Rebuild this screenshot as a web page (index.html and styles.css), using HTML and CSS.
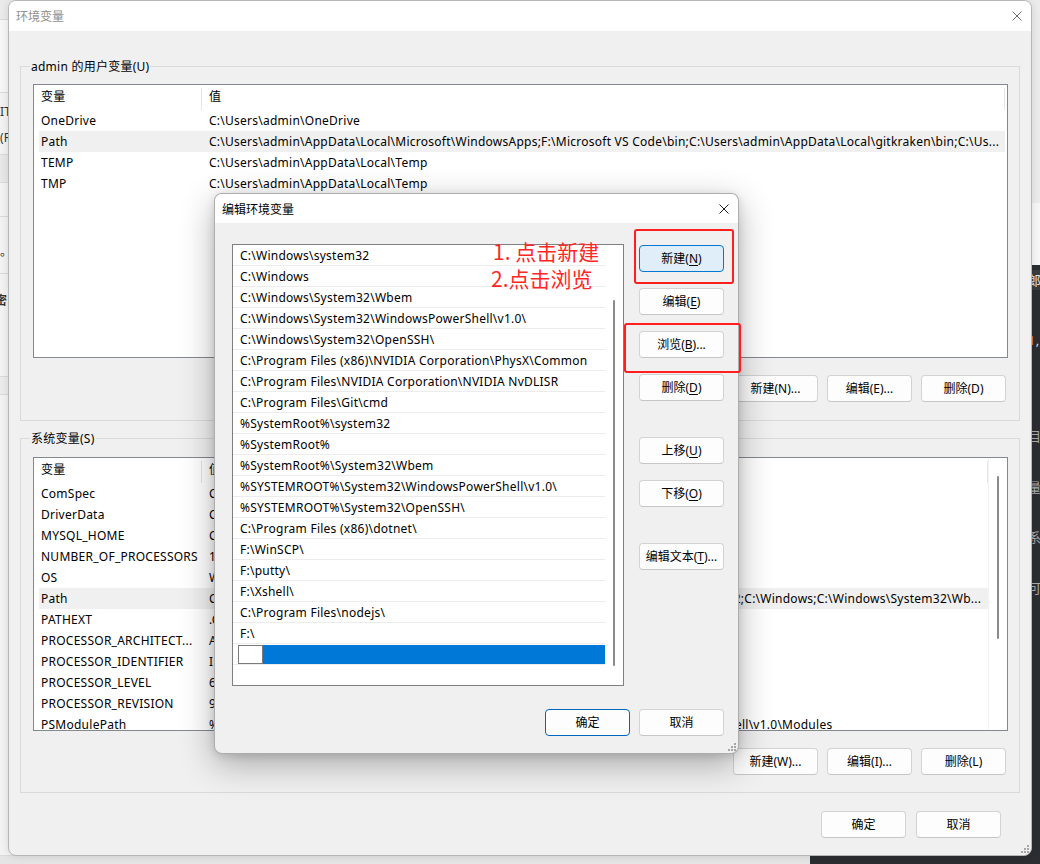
FILE: index.html
```html
<!DOCTYPE html>
<html lang="zh-CN">
<head>
<meta charset="utf-8">
<title>环境变量</title>
<link rel="stylesheet" href="styles.css">
</head>
<body>
<div class="desktop">

  <div class="bg-left">
    <div class="bl bl1"></div>
    <div class="bl bl2"></div>
    <div class="bl bl3"><div class="bl-t">IT</div><div class="bl-t">(R</div></div>
    <div class="bl bl4"></div>
    <div class="bl bl5"></div>
    <div class="bl bl6"><div class="bl-t">。</div></div>
    <div class="bl bl7"><div class="bl-t bl-bold">密</div></div>
    <div class="bl bl8"></div>
    <div class="bl bl9"></div>
  </div>

  <div class="bg-topright">
    <div class="tr-band"></div>
    <div class="tr-white"></div>
  </div>

  <div class="bg-dark">
    <div class="frag f1"><span class="frag-hl">郎</span></div>
    <div class="frag f2"><span class="frag-or">1</span>,</div>
    <div class="frag f3">目</div>
    <div class="frag f4">量</div>
    <div class="frag f5">系</div>
    <div class="frag f6">可</div>
  </div>

  <div class="win main-win">
    <div class="titlebar">
      <span class="title title-inactive">环境变量</span>
      <svg class="close" width="10" height="10" viewBox="0 0 10 10"><path d="M0.5 0.5L9.5 9.5M9.5 0.5L0.5 9.5" stroke="#6b6b6b" stroke-width="1" fill="none"/></svg>
    </div>
    <div class="main-body">
      <section class="group group-user">
        <div class="legend">admin 的用户变量(U)</div>
        <div class="lv">
          <div class="lv-main lv-main-user">
            <div class="lv-head"><div class="hc hc-name">变量</div><div class="hc hc-val">值</div></div>
            <div class="lv-row"><div class="c-name">OneDrive</div><div class="c-val">C:\Users\admin\OneDrive</div></div>
            <div class="lv-row hl"><div class="c-name">Path</div><div class="c-val">C:\Users\admin\AppData\Local\Microsoft\WindowsApps;F:\Microsoft VS Code\bin;C:\Users\admin\AppData\Local\gitkraken\bin;C:\Us...</div></div>
            <div class="lv-row"><div class="c-name">TEMP</div><div class="c-val">C:\Users\admin\AppData\Local\Temp</div></div>
            <div class="lv-row"><div class="c-name">TMP</div><div class="c-val">C:\Users\admin\AppData\Local\Temp</div></div>
          </div>
        </div>
        <div class="btn-row">
          <button class="btn">新建(N)...</button>
          <button class="btn">编辑(E)...</button>
          <button class="btn">删除(D)</button>
        </div>
      </section>

      <section class="group group-sys">
        <div class="legend">系统变量(S)</div>
        <div class="lv">
          <div class="lv-main">
            <div class="lv-head"><div class="hc hc-name">变量</div><div class="hc hc-val">值</div></div>
            <div class="lv-row"><div class="c-name">ComSpec</div><div class="c-val">C:\WINDOWS\system32\cmd.exe</div></div>
            <div class="lv-row"><div class="c-name">DriverData</div><div class="c-val">C:\Windows\System32\Drivers\DriverData</div></div>
            <div class="lv-row"><div class="c-name">MYSQL_HOME</div><div class="c-val">C:\Program Files\MySQL\MySQL Server 8.0</div></div>
            <div class="lv-row"><div class="c-name">NUMBER_OF_PROCESSORS</div><div class="c-val">16</div></div>
            <div class="lv-row"><div class="c-name">OS</div><div class="c-val">Windows_NT</div></div>
            <div class="lv-row hl"><div class="c-name">Path</div><div class="c-val">C:\Program Files\Common Files\Oracle\Java\javapath;D:\jdk1.8\bin;C:\WINDOWS\system32;C:\Windows;C:\Windows\System32\Wb...</div></div>
            <div class="lv-row"><div class="c-name">PATHEXT</div><div class="c-val">.COM;.EXE;.BAT;.CMD;.VBS;.VBE;.JS;.JSE;.WSF;.WSH;.MSC</div></div>
            <div class="lv-row"><div class="c-name">PROCESSOR_ARCHITECT...</div><div class="c-val">AMD64</div></div>
            <div class="lv-row"><div class="c-name">PROCESSOR_IDENTIFIER</div><div class="c-val">Intel64 Family 6 Model 154 Stepping 3, GenuineIntel</div></div>
            <div class="lv-row"><div class="c-name">PROCESSOR_LEVEL</div><div class="c-val">6</div></div>
            <div class="lv-row"><div class="c-name">PROCESSOR_REVISION</div><div class="c-val">9a03</div></div>
            <div class="lv-row"><div class="c-name">PSModulePath</div><div class="c-val">%ProgramFiles%\WindowsPowerShell\Modules;C:\WINDOWS\system32\WindowsPowerShell\v1.0\Modules</div></div>
          </div>
          <div class="lv-scroll"><div class="thumb thumb-sys"></div></div>
        </div>
        <div class="btn-row">
          <button class="btn">新建(W)...</button>
          <button class="btn">编辑(I)...</button>
          <button class="btn">删除(L)</button>
        </div>
      </section>

      <div class="main-foot">
        <button class="btn">确定</button>
        <button class="btn">取消</button>
      </div>
    </div>
    <svg class="grip" width="8" height="8" viewBox="0 0 8 8"><g fill="#a6a6a6"><rect x="6" y="0" width="2" height="2"/><rect x="6" y="3" width="2" height="2"/><rect x="3" y="3" width="2" height="2"/><rect x="6" y="6" width="2" height="2"/><rect x="3" y="6" width="2" height="2"/><rect x="0" y="6" width="2" height="2"/></g></svg>
  </div>

  <div class="win dialog">
    <div class="titlebar dlg-titlebar">
      <span class="title">编辑环境变量</span>
      <svg class="close" width="10" height="10" viewBox="0 0 10 10"><path d="M0.5 0.5L9.5 9.5M9.5 0.5L0.5 9.5" stroke="#1a1a1a" stroke-width="1" fill="none"/></svg>
    </div>
    <div class="dlg-body">
      <div class="dlg-top">
        <div class="plist">
          <ul class="pl-items">
            <li>C:\Windows\system32</li>
            <li>C:\Windows</li>
            <li>C:\Windows\System32\Wbem</li>
            <li>C:\Windows\System32\WindowsPowerShell\v1.0\</li>
            <li>C:\Windows\System32\OpenSSH\</li>
            <li>C:\Program Files (x86)\NVIDIA Corporation\PhysX\Common</li>
            <li>C:\Program Files\NVIDIA Corporation\NVIDIA NvDLISR</li>
            <li>C:\Program Files\Git\cmd</li>
            <li>%SystemRoot%\system32</li>
            <li>%SystemRoot%</li>
            <li>%SystemRoot%\System32\Wbem</li>
            <li>%SYSTEMROOT%\System32\WindowsPowerShell\v1.0\</li>
            <li>%SYSTEMROOT%\System32\OpenSSH\</li>
            <li>C:\Program Files (x86)\dotnet\</li>
            <li>F:\WinSCP\</li>
            <li>F:\putty\</li>
            <li>F:\Xshell\</li>
            <li>C:\Program Files\nodejs\</li>
            <li>F:\</li>
            <li class="editing"><span class="edit-box"></span><span class="edit-sel"></span></li>
          </ul>
          <div class="pl-scroll"><div class="thumb thumb-dlg"></div></div>
        </div>
        <div class="dlg-btns">
          <button class="btn btn-focus">新建(<u>N</u>)</button>
          <button class="btn">编辑(<u>E</u>)</button>
          <button class="btn">浏览(<u>B</u>)...</button>
          <button class="btn">删除(<u>D</u>)</button>
          <button class="btn spaced">上移(<u>U</u>)</button>
          <button class="btn">下移(<u>O</u>)</button>
          <button class="btn spaced">编辑文本(<u>T</u>)...</button>
        </div>
      </div>
      <div class="dlg-foot">
        <button class="btn btn-default">确定</button>
        <button class="btn">取消</button>
      </div>
    </div>
    <svg class="grip" width="8" height="8" viewBox="0 0 8 8"><g fill="#a6a6a6"><rect x="6" y="0" width="2" height="2"/><rect x="6" y="3" width="2" height="2"/><rect x="3" y="3" width="2" height="2"/><rect x="6" y="6" width="2" height="2"/><rect x="3" y="6" width="2" height="2"/><rect x="0" y="6" width="2" height="2"/></g></svg>
  </div>

  <div class="mark mark-new"></div>
  <div class="mark mark-browse"></div>
  <div class="note note-1">1. 点击新建</div>
  <div class="note note-2">2.点击浏览</div>
</div>
</body>
</html>
```

FILE: styles.css
```css
* { box-sizing: border-box; }

html, body { margin: 0; padding: 0; }

body {
  width: 1040px;
  height: 864px;
  overflow: hidden;
  background: #e5e5e5;
  font-family: "Noto Sans", "Noto Sans CJK SC", sans-serif;
  font-size: 12px;
  letter-spacing: 0.25px;
  color: #000;
}

.desktop {
  position: relative;
  width: 1040px;
  height: 864px;
}

/* ---------- background windows ---------- */
.bg-left {
  position: absolute;
  left: 0;
  top: 0;
  width: 60px;
  height: 856px;
  background: #f3f3f3;
  display: flex;
  flex-direction: column;
  overflow: hidden;
}
.bl { border-bottom: 1px solid #dadada; flex: none; white-space: nowrap; }
.bl1 { height: 20px; background: #ebebeb; }
.bl2 { height: 73px; background: #f7f7f7; }
.bl3 { height: 62px; padding-top: 6px; background: #f3f3f3; }
.bl4 { height: 28px; background: #e8e8e8; }
.bl5 { height: 34px; background: #f3f3f3; }
.bl6 { height: 57px; padding-top: 22px; }
.bl7 { height: 103px; padding-top: 14px; }
.bl8 { height: 18px; background: #ececec; }
.bl9 { flex: 1; background: #f3f3f3; }
.bl-t { line-height: 26px; color: #333; }
.bl-bold { margin-left: -5px; font-weight: bold; }

.bg-topright {
  position: absolute;
  left: 900px;
  top: 0;
  width: 140px;
  height: 265px;
  background: #f0f0f0;
  display: flex;
  flex-direction: column;
}
.tr-band { height: 203px; background: #ececec; }
.tr-white { flex: 1; background: #f7f7f7; }

.bg-dark {
  position: absolute;
  left: 810px;
  top: 265px;
  width: 230px;
  height: 599px;
  background: #2b2d30;
  color: #a9abaf;
  padding-left: 218px;
  display: flex;
  flex-direction: column;
}
.frag { height: 20px; line-height: 20px; white-space: nowrap; font-size: 13px; }
.f1 { margin-top: 5px; margin-left: -218px; padding-left: 218px; background: #3a3c40; color: #e6e6e6; }
.f2 { margin-top: 40px; color: #dddddd; }
.f3 { margin-top: 76px; }
.f4 { margin-top: 31px; }
.f5 { margin-top: 30px; }
.f6 { margin-top: 31px; }
.frag-or { color: #e0903a; }

/* ---------- windows ---------- */
.win {
  position: absolute;
  display: flex;
  flex-direction: column;
  background: #f0f0f0;
  border-radius: 8px;
  overflow: hidden;
}

.main-win {
  left: 8px;
  top: 0;
  width: 1024px;
  height: 856px;
  border: 1px solid #b7b7b7;
  box-shadow: 0 0 8px rgba(0, 0, 0, 0.12);
}

.titlebar {
  flex: none;
  height: 30px;
  background: #fff;
  display: flex;
  align-items: center;
  justify-content: space-between;
  padding: 0 9px 0 7px;
}
.title { white-space: nowrap; letter-spacing: 0; }
.title-inactive { color: #8f8f8f; }
.close { display: block; }

.grip {
  position: absolute;
  right: 2px;
  bottom: 2px;
}

.main-body {
  flex: 1;
  display: flex;
  flex-direction: column;
  padding: 35px 11px 0 11px;
}

.group {
  position: relative;
  border: 1px solid #dadada;
  padding: 17px 11px 17px 12px;
}
.group-user { padding-bottom: 18px; }
.group-sys { margin-top: 17px; padding-top: 18px; }

.legend {
  position: absolute;
  top: -9px;
  left: 9px;
  padding: 0 1px;
  line-height: 17px;
  background: #f0f0f0;
  white-space: nowrap;
}

/* list view */
.lv {
  height: 274px;
  background: #fff;
  border: 1px solid #84888f;
  display: flex;
  overflow: hidden;
}
.lv-main {
  flex: 1;
  min-width: 0;
  display: flex;
  flex-direction: column;
}
.lv-main-user { padding-right: 2px; }

.lv-head {
  flex: none;
  height: 25px;
  display: flex;
  padding-top: 3px;
}
.hc {
  height: 22px;
  line-height: 18px;
  border-right: 1px solid #e5e5e5;
  padding-left: 7px;
  white-space: nowrap;
}
.hc-name { width: 168px; }
.hc-val { flex: 1; }

.lv-row {
  flex: none;
  height: 21px;
  line-height: 22px;
  margin-left: 5px;
  display: flex;
  white-space: nowrap;
}
.lv-row.hl { background: #f0f0f0; }
.c-name {
  width: 163px;
  flex: none;
  padding-left: 2px;
  overflow: hidden;
}
.c-val {
  flex: 1;
  min-width: 0;
  padding: 0 0 0 7px;
  overflow: hidden;
}

.lv-scroll {
  width: 19px;
  flex: none;
  padding-top: 18px;
  display: flex;
  justify-content: center;
  border-left: 1px solid #f2f2f2;
}
.thumb {
  width: 2px;
  background: #8a8a8a;
  border-radius: 1px;
}
.thumb-sys { height: 163px; }

.btn-row {
  display: flex;
  justify-content: flex-end;
  gap: 9px;
  margin-top: 17px;
  padding-right: 2px;
}

.main-foot {
  display: flex;
  justify-content: flex-end;
  gap: 10px;
  margin-top: 18px;
  padding-right: 19px;
}

/* buttons */
.btn {
  width: 85px;
  height: 27px;
  flex: none;
  padding: 0;
  margin: 0;
  font: inherit;
  font-size: 12px;
  letter-spacing: 0;
  line-height: 25px;
  color: #000;
  text-align: center;
  white-space: nowrap;
  background: #fdfdfd;
  border: 1px solid #d3d3d3;
  border-bottom-color: #c6c6c6;
  border-radius: 4px;
}
.btn u { text-underline-offset: 2px; }
.btn-focus {
  background: #e0eef9;
  border-color: #0078d4;
}
.btn-default {
  background: #fdfdfd;
  border-color: #0067c0;
}

/* ---------- dialog ---------- */
.dialog {
  left: 214px;
  top: 193px;
  width: 525px;
  height: 561px;
  border: 1px solid rgba(0, 0, 0, 0.28);
  box-shadow: 0 10px 34px rgba(0, 0, 0, 0.30), 0 2px 8px rgba(0, 0, 0, 0.12);
  z-index: 2;
}
.dlg-titlebar { height: 29px; }

.dlg-body {
  flex: 1;
  display: flex;
  flex-direction: column;
  padding: 21px 14px 0 17px;
}
.dlg-top {
  display: flex;
  gap: 15px;
}

.plist {
  width: 392px;
  height: 442px;
  flex: none;
  background: #fff;
  border: 1px solid #7f7f7f;
  display: flex;
  overflow: hidden;
}
.pl-items {
  list-style: none;
  margin: 0;
  padding: 0;
  width: 372px;
  flex: none;
}
.pl-items li {
  height: 21px;
  line-height: 22px;
  padding-left: 7px;
  border-bottom: 1px solid #ececec;
  white-space: nowrap;
  overflow: hidden;
}
.pl-items li.editing {
  display: flex;
  padding: 1px 0 0 5px;
}
.edit-box {
  width: 25px;
  height: 19px;
  background: #fff;
  border: 1px solid #7a7a7a;
}
.edit-sel {
  flex: 1;
  height: 19px;
  background: #0078d7;
}
.pl-scroll {
  flex: 1;
  padding-top: 55px;
  display: flex;
  justify-content: center;
  background: #fff;
}
.thumb-dlg { height: 366px; }

.dlg-btns {
  width: 85px;
  flex: none;
  display: flex;
  flex-direction: column;
  gap: 16px;
  padding-top: 1px;
}
.dlg-btns .spaced { margin-top: 20px; }

.dlg-foot {
  display: flex;
  justify-content: flex-end;
  gap: 9px;
  margin-top: 23px;
}

/* ---------- annotations ---------- */
.mark {
  position: absolute;
  border: 2px solid #ff1f1f;
  border-radius: 3px;
  z-index: 5;
}
.mark-new { left: 634px; top: 229px; width: 100px; height: 55px; }
.mark-browse { left: 624px; top: 323px; width: 117px; height: 50px; }

.note {
  position: absolute;
  z-index: 5;
  color: #ff2626;
  font-family: "Noto Sans CJK SC", "Noto Sans", sans-serif;
  font-size: 21px;
  letter-spacing: 0;
  line-height: 24px;
  white-space: nowrap;
}
.note-1 { left: 493px; top: 239px; }
.note-2 { left: 491px; top: 266px; }
```
